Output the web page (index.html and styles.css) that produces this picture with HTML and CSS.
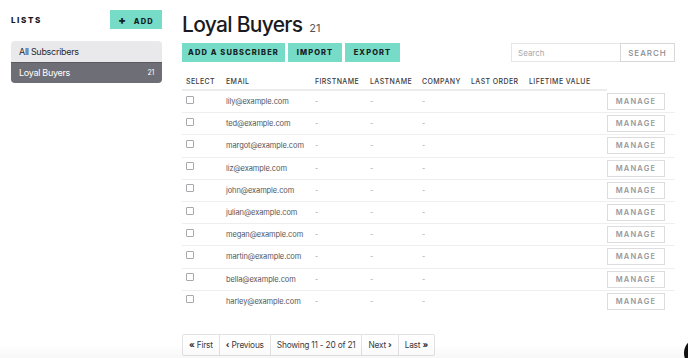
FILE: index.html
```html
<!DOCTYPE html>
<html>
<head>
  <meta charset="UTF-8">
  <title>Loyal Buyers</title>
  <link rel="stylesheet" href="styles.css">
</head>
<body>
<div class="page">
  <aside class="side">
    <div class="side-head">
      <span class="side-title">LISTS</span>
      <button class="btn teal add"><b>+</b> ADD</button>
    </div>
    <div class="lists">
      <div class="list-item">All Subscribers</div>
      <div class="list-item active">Loyal Buyers <span class="cnt">21</span></div>
    </div>
  </aside>

  <main class="main">
    <h1 class="title">Loyal Buyers <span class="num">21</span></h1>
    <div class="toolbar">
      <div class="actions">
        <button class="btn teal">ADD A SUBSCRIBER</button>
        <button class="btn teal">IMPORT</button>
        <button class="btn teal">EXPORT</button>
      </div>
      <div class="search">
        <input type="text" placeholder="Search">
        <button class="btn ghost">SEARCH</button>
      </div>
    </div>

    <table class="subs">
      <thead>
        <tr>
          <th class="c-sel">SELECT</th>
          <th class="c-email">EMAIL</th>
          <th class="c-first">FIRSTNAME</th>
          <th class="c-last">LASTNAME</th>
          <th class="c-comp">COMPANY</th>
          <th class="c-order">LAST ORDER</th>
          <th class="c-life">LIFETIME VALUE</th>
          <th class="c-act"></th>
        </tr>
      </thead>
      <tbody id="rows"></tbody>
    </table>

    <div class="pager">
      <span class="pg"><span class="ch">&laquo;</span> First</span>
      <span class="pg"><span class="ch">&lsaquo;</span> Previous</span>
      <span class="pg">Showing 11 - 20 of 21</span>
      <span class="pg">Next <span class="ch">&rsaquo;</span></span>
      <span class="pg">Last <span class="ch">&raquo;</span></span>
    </div>
  </main>
</div>
<div class="chat"></div>

<script>
const emails = ["lily", "ted", "margot", "liz", "john", "julian", "megan", "martin", "bella", "harley"];
const tbody = document.getElementById("rows");
emails.forEach(name => {
  const tr = document.createElement("tr");
  tr.innerHTML = `
    <td><span class="box"></span></td>
    <td class="email">${name}@example.com</td>
    <td class="dash">-</td>
    <td class="dash">-</td>
    <td class="dash">-</td>
    <td></td>
    <td></td>
    <td class="act"><button class="btn manage">MANAGE</button></td>`;
  tbody.appendChild(tr);
});
</script>
</body>
</html>
```

FILE: styles.css
```css
body { margin: 0; background: #fff; color: #1a1a22; font-family: Inter, "Liberation Sans", sans-serif; overflow: hidden; height: 358px; position: relative; }
.page { display: flex; padding: 10px 13px 0 11px; }

.side { width: 151px; flex: none; }
.side-head { display: flex; justify-content: space-between; align-items: center; height: 19px; }
.side-title { font-size: 8px; font-weight: 800; letter-spacing: 1.6px; color: #15151c; }
.lists { margin-top: 12px; border-radius: 4px; overflow: hidden; background: #e9e9ec; }
.list-item { height: 21px; line-height: 21px; padding: 0 8px; font-size: 9px; color: #2a2a30; display: flex; justify-content: space-between; letter-spacing: -0.3px; }
.list-item.active { background: #6e6e76; color: #fff; border-top: 1px solid #5a5a60; height: 20px; line-height: 20px; }
.cnt { font-size: 7px; }

.btn { font-family: inherit; border: none; cursor: pointer; font-weight: 800; font-size: 7.5px; letter-spacing: 1.1px; padding: 0; }
.teal { background: #76dbc7; color: #16201d; height: 19px; }
.add { width: 52px; height: 19px; }
.add b { font-size: 11px; margin-right: 4px; }

.main { margin-left: 20px; flex: 1; }
.title { margin: 0; font-size: 21px; font-weight: 500; line-height: 30px; letter-spacing: -0.7px; height: 30px; }
.num { font-size: 11px; color: #555; font-weight: 400; letter-spacing: 0; margin-left: 2px; }

.toolbar { display: flex; justify-content: space-between; margin-top: 3px; }
.actions { display: flex; gap: 3px; }
.actions .btn:nth-child(1) { width: 103px; }
.actions .btn:nth-child(2) { width: 54px; }
.actions .btn:nth-child(3) { width: 55px; }
.search { display: flex; height: 19px; }
.search input { width: 109px; box-sizing: border-box; border: 1px solid #e6e6e8; border-right: none; font-family: inherit; font-size: 8px; padding: 0 6px; color: #333; outline: none; }
.search input::placeholder { color: #a8a8ac; }
.ghost { background: #fff; border: 1px solid #d8d8db; color: #8a8a90; font-weight: 500; width: 55px; font-size: 8px; letter-spacing: 1px; }

.subs { width: 100%; border-collapse: collapse; margin-top: 11px; font-size: 7px; }
.subs th { text-align: left; font-weight: 500; color: #3a3a40; letter-spacing: 0.4px; height: 16px; padding: 0; vertical-align: middle; border-bottom: 2px solid #ececee; white-space: nowrap; }
.subs th.c-act { border-bottom-color: transparent; }
.subs td { height: 21.2px; border-bottom: 1px solid #eeeef0; padding: 0; vertical-align: middle; }
.subs tr:last-child td { border-bottom: none; }
.c-sel { width: 40px; padding-left: 4px !important; }
.c-email { width: 89px; }
.c-first { width: 55px; }
.c-last { width: 52px; }
.c-comp { width: 49px; }
.c-order { width: 58px; }
.c-life { width: 78px; }
.subs td:first-child { padding-left: 4px; }
.box { display: block; width: 6px; height: 6px; border: 1px solid #a9a9ad; border-radius: 1px; margin-top: -4px; }
.email { color: #55555b; font-size: 7.5px; letter-spacing: -0.1px; }
.dash { color: #999; }
.act { text-align: left; }
.manage { background: #fff; border: 1px solid #dcdcdf; color: #98989d; width: 58px; height: 17px; font-weight: 600; font-size: 7.5px; letter-spacing: 1.2px; }

.pager { display: inline-flex; margin-top: 22px; border: 1px solid #e2e2e5; border-radius: 2px; }
.pg { height: 20px; line-height: 20px; padding: 0 6px; font-size: 8.3px; color: #3a3a40; border-left: 1px solid #e2e2e5; letter-spacing: -0.2px; }
.pg:first-child { border-left: none; }
.ch { font-weight: 800; }

.chat { position: absolute; left: 684px; top: 338px; width: 30px; height: 30px; border-radius: 50%; background: #111; }
body::after { content: ""; position: absolute; left: 0; right: 0; bottom: 0; height: 14px; background: linear-gradient(to bottom, rgba(0,0,0,0), rgba(0,0,0,0.03)); }
```
